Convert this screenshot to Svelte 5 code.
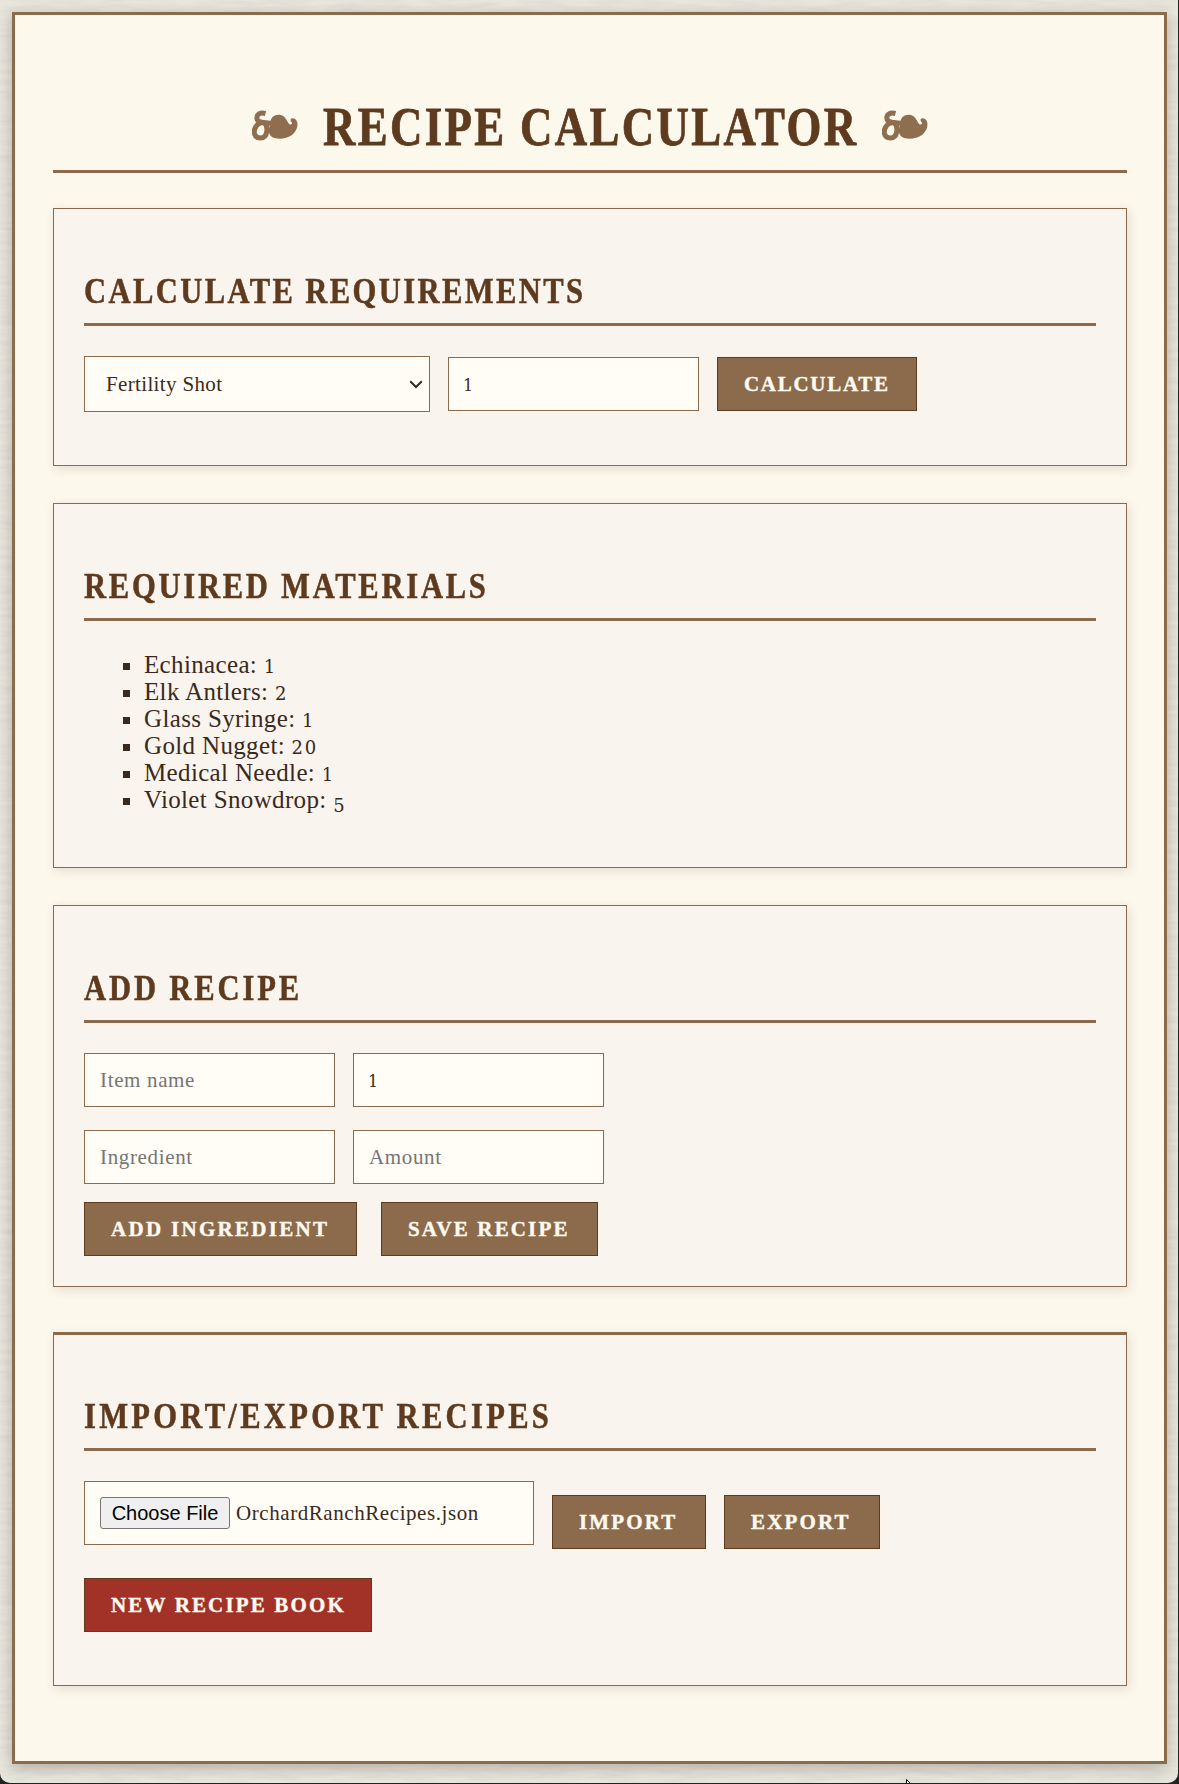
<script lang="ts">
  const materials = [
    { name: 'Echinacea', amount: 1 },
    { name: 'Elk Antlers', amount: 2 },
    { name: 'Glass Syringe', amount: 1 },
    { name: 'Gold Nugget', amount: 20 },
    { name: 'Medical Needle', amount: 1 },
    { name: 'Violet Snowdrop', amount: 5 }
  ];
</script>

{#snippet flourish()}
  <svg class="flourish" viewBox="0 0 46 31" width="46" height="31" aria-hidden="true">
    <path d="M13.500 3.500C8 2 4.800 4.500 4.800 8C4.800 11 8 12.200 12 12.700C16.500 16 16 28 8.500 28C1.500 28 1 21 4 16.500C5.500 14 8 12.500 12 12.500L20 13.500" fill="none" stroke="currentColor" stroke-width="5" />
    <path d="M18.500 13C18 8 22 4.500 27 4.700C32 5 34 8.500 36 12.500C37 14.500 39 15.500 40 13.500C40.500 12.300 38.300 11.500 38.500 9.700C39 7.500 42.500 7.500 44.500 10.500C47 15 44.500 21.500 40 25C35 28.700 25 30 20 27C16 24.500 16 18 18.500 15Z" fill="currentColor" />
  </svg>
{/snippet}

<div class="page">
  <svg class="paper" width="1178" height="1783" aria-hidden="true">
    <filter id="grain" x="0" y="0" width="100%" height="100%">
      <feTurbulence type="fractalNoise" baseFrequency="0.03 0.2" numOctaves="3" seed="7" />
      <feColorMatrix values="0 0 0 0 0.45  0 0 0 0 0.45  0 0 0 0 0.42  0.3 0 0 0 -0.09" />
    </filter>
    <rect width="1178" height="1783" filter="url(#grain)" />
  </svg>

  <main class="book">
    <h1>
      {@render flourish()}
      <span class="title"><span class="squeeze">RECIPE CALCULATOR</span></span>
      {@render flourish()}
    </h1>

    <section class="card calc">
      <h2><span class="squeeze">CALCULATE REQUIREMENTS</span></h2>
      <div class="row">
        <div class="select">
          <select><option>Fertility Shot</option></select>
          <svg class="chevron" viewBox="0 0 14 9" width="14" height="9"><path d="M1.200 1.200L7 7L12.800 1.200" fill="none" stroke="#3a2a1d" stroke-width="2" /></svg>
        </div>
        <input class="num" value="1" />
        <button class="b-calc">CALCULATE</button>
      </div>
    </section>

    <section class="card materials">
      <h2><span class="squeeze">REQUIRED MATERIALS</span></h2>
      <ul>
        {#each materials as m}
          <li>{m.name}: <span class="amount" class:hang={m.amount === 5}>{m.amount}</span></li>
        {/each}
      </ul>
    </section>

    <section class="card add">
      <h2><span class="squeeze">ADD RECIPE</span></h2>
      <div class="row"><input placeholder="Item name" /><input class="num" value="1" /></div>
      <div class="row second"><input placeholder="Ingredient" /><input placeholder="Amount" /></div>
      <div class="row actions">
        <button class="b-add">ADD INGREDIENT</button>
        <button class="b-save">SAVE RECIPE</button>
      </div>
    </section>

    <section class="card transfer">
      <h2><span class="squeeze">IMPORT/EXPORT RECIPES</span></h2>
      <div class="row files">
        <div class="file"><span class="choose">Choose File</span><span class="filename">OrchardRanchRecipes.json</span></div>
        <button class="b-import">IMPORT</button>
        <button class="b-export">EXPORT</button>
      </div>
      <button class="b-new">NEW RECIPE BOOK</button>
    </section>
  </main>

  <svg class="pointer" viewBox="0 0 12 18" width="12" height="18"><path d="M.500 .500V15.500L4 12.500L6.500 17L8.500 16L6.500 11.500H11.500Z" fill="#fff" stroke="#000" /></svg>
</div>

<style>
  :global(body) { margin: 0; background: #222423; }
  * { box-sizing: border-box; }
  .page {
    position: relative;
    width: 1178px;
    height: 1783px;
    padding: 12px 11px 0 12px;
    overflow: hidden;
    border-radius: 0 0 10px 10px;
    background: #ebe8de;
    font-family: "Liberation Serif", serif;
    color: #3a2a1d;
  }
  .paper { position: absolute; left: 0; top: 0; }
  .book {
    position: relative;
    width: 1155px;
    height: 1752px;
    padding: 0 37px 0 38px;
    border: 3px solid #8b6b4b;
    background: #fdf8ec;
    box-shadow: 0 4px 15px rgba(0, 0, 0, 0.25);
  }
  h1 {
    display: flex;
    justify-content: center;
    align-items: flex-end;
    height: 158px;
    margin: 0 0 35px;
    padding: 0 0 13px;
    border-bottom: 3px solid #8b6b4b;
    font-size: 54px;
    line-height: 60px;
    color: #5e3a1e;
  }
  .title { width: 532px; margin: 0 27px 0 25px; }
  .squeeze {
    display: inline-block;
    white-space: nowrap;
    transform: scaleX(0.85);
    transform-origin: left;
    letter-spacing: 3.200px;
    -webkit-text-stroke: 0.500px currentColor;
  }
  .calc .squeeze { letter-spacing: 2.800px; }
  .add .squeeze { letter-spacing: 3.350px; }
  .transfer .squeeze { letter-spacing: 3.850px; }
  .title .squeeze { transform: scaleX(0.83); letter-spacing: 2.850px; -webkit-text-stroke-width: 0.800px; }
  .flourish { margin-bottom: 16px; color: #8f6e4f; }

  .card {
    padding: 0 30px;
    border: 1px solid #8b6b4b;
    background: #f9f4ed;
    box-shadow: 2px 3px 10px rgba(60, 40, 20, 0.13);
  }
  .calc { height: 258px; }
  .materials { height: 365px; margin-top: 37px; }
  .add { height: 382px; margin-top: 37px; }
  .transfer { height: 354px; margin-top: 45px; border-top-width: 3px; }
  h2 {
    height: 117px;
    margin: 0 0 30px;
    padding-top: 62px;
    border-bottom: 3px solid #8b6b4b;
    font-size: 36px;
    line-height: 40px;
    color: #5e3a1e;
  }
  .transfer h2 { height: 116px; padding-top: 61px; }

  .row { display: flex; gap: 18px; align-items: center; }
  .second { margin-top: 23px; }
  .actions { gap: 24px; margin-top: 18px; }
  .files { height: 64px; align-items: flex-start; margin-bottom: 33px; }
  .files button { margin-top: 14px; }

  input, select, .file {
    border: 1px solid #8b6b4b;
    border-radius: 0;
    background: #fffdf5;
    font-family: "Liberation Serif", serif;
    font-size: 21px;
    letter-spacing: 0.350px;
    color: #3a2a1d;
  }
  input { width: 251px; height: 54px; padding: 0 15px; }
  input::placeholder { color: #757575; opacity: 1; letter-spacing: 0.650px; }
  .num { padding: 2px 14px 0; font-family: "DejaVu Serif", serif; font-size: 16px; }
  .select { display: grid; align-items: center; width: 346px; height: 56px; }
  select {
    grid-area: 1 / 1;
    width: 346px;
    height: 56px;
    padding: 0 21px;
    appearance: none;
  }
  .chevron { grid-area: 1 / 1; z-index: 1; justify-self: end; margin-right: 7px; pointer-events: none; }

  button {
    height: 54px;
    padding: 0 0 0 26px;
    border: 1px solid #5e3a1e;
    border-radius: 0;
    background: #8b6b4b;
    font: bold 21px "Liberation Serif", serif;
    letter-spacing: 2.150px;
    -webkit-text-stroke: 0.400px currentColor;
    text-align: left;
    white-space: nowrap;
    color: #fffaf0;
  }
  .b-calc { width: 200px; letter-spacing: 1.700px; }
  .b-add { width: 273px; letter-spacing: 2.300px; }
  .b-save { width: 217px; }
  .b-import { width: 154px; }
  .b-export { width: 156px; }
  .b-new { display: block; width: 288px; background: #a23127; }

  ul { margin: 0; padding: 0 0 0 60px; list-style: none; font-size: 25px; line-height: 27px; letter-spacing: 0.350px; }
  li { position: relative; height: 27px; white-space: nowrap; }
  li::before { content: ""; position: absolute; left: -21px; top: 12px; width: 7px; height: 7px; background: #3a2a1d; }
  .amount { font-family: "DejaVu Serif", serif; font-size: 18px; line-height: 1; letter-spacing: 1.800px; }
  .hang { position: relative; top: 4px; }

  .file { display: flex; align-items: center; width: 450px; height: 64px; padding-left: 15px; }
  .choose {
    width: 130px;
    height: 32px;
    border: 1px solid #767676;
    border-radius: 3px;
    background: #efefef;
    font: 20px/31px "Liberation Sans", sans-serif;
    letter-spacing: 0;
    text-align: center;
    color: #000;
  }
  .filename { margin-left: 6px; letter-spacing: 0.570px; }
  .pointer { position: absolute; left: 906px; top: 1779px; }
</style>
